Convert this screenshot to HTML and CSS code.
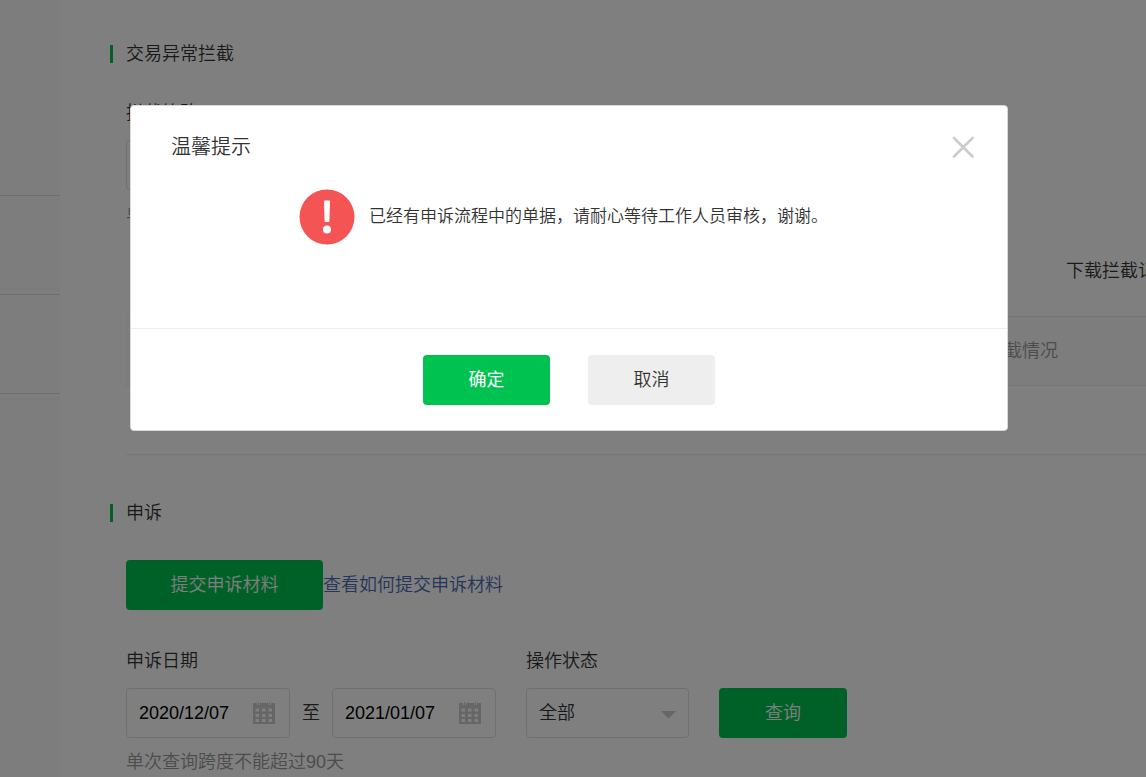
FILE: index.html
```html
<!DOCTYPE html>
<html lang="zh-CN">

<head>
  <meta charset="UTF-8" />
  <meta name="viewport" content="width=device-width, initial-scale=1.0" />
  <title>交易异常拦截</title>
  <link rel="stylesheet" href="styles.css">
</head>

<body>
  <div class="page">
    <aside class="sidebar">
      <div class="side-item first"></div>
      <div class="side-item"></div>
      <div class="side-item"></div>
    </aside>

    <main class="main">
      <section class="block">
        <h2 class="block-title">交易异常拦截</h2>
        <div class="block-body">
          <div class="field">
            <label for="blockDate">拦截策略</label>
            <input type="text" id="blockDate" class="input" />
            <p class="hint">单</p>
          </div>
          <div class="download"><a href="#">下载拦截记录</a></div>
          <table class="table">
            <thead>
              <tr>
                <th></th>
                <th class="col-status">拦截情况</th>
              </tr>
            </thead>
            <tbody>
              <tr>
                <td></td>
                <td></td>
              </tr>
            </tbody>
          </table>
        </div>
      </section>

      <section class="block">
        <h2 class="block-title">申诉</h2>
        <div class="block-body">
          <div class="submit-row">
            <button class="btn btn-green btn-submit">提交申诉材料</button>
            <a href="#" class="help">查看如何提交申诉材料</a>
          </div>
          <form class="search" onsubmit="return false">
            <div class="field">
              <label for="startDate">申诉日期</label>
              <div class="dates">
                <div class="control">
                  <input type="text" id="startDate" class="input" value="2020/12/07" />
                  <svg class="calendar" width="22" height="22" viewBox="0 0 22 22">
                    <path fill="currentColor" fill-rule="evenodd" d="M0 1H4V3H7V1H15V3H18V1H22V22H0ZM2.5 6.5V9.5H6V6.5ZM9 6.5V9.5H12.5V6.5ZM15.5 6.5V9.5H19V6.5ZM2.5 12V15H6V12ZM9 12V15H12.5V12ZM15.5 12V15H19V12ZM2.5 17V20H6V17ZM9 17V20H12.5V17ZM15.5 17V20H19V17Z" />
                    <path fill="currentColor" d="M5 0H6V3H5ZM16 0H17V3H16Z" />
                  </svg>
                </div>
                <span>至</span>
                <div class="control">
                  <input type="text" class="input" value="2021/01/07" aria-label="结束日期" />
                  <svg class="calendar" width="22" height="22" viewBox="0 0 22 22">
                    <path fill="currentColor" fill-rule="evenodd" d="M0 1H4V3H7V1H15V3H18V1H22V22H0ZM2.5 6.5V9.5H6V6.5ZM9 6.5V9.5H12.5V6.5ZM15.5 6.5V9.5H19V6.5ZM2.5 12V15H6V12ZM9 12V15H12.5V12ZM15.5 12V15H19V12ZM2.5 17V20H6V17ZM9 17V20H12.5V17ZM15.5 17V20H19V17Z" />
                    <path fill="currentColor" d="M5 0H6V3H5ZM16 0H17V3H16Z" />
                  </svg>
                </div>
              </div>
              <p class="hint">单次查询跨度不能超过90天</p>
            </div>
            <div class="field">
              <label for="status">操作状态</label>
              <div class="control">
                <select id="status" class="input">
                  <option>全部</option>
                </select>
                <svg class="arrow" width="16" height="8" viewBox="0 0 16 8">
                  <path fill="currentColor" d="M0 0H15L7.5 7.5Z" />
                </svg>
              </div>
            </div>
            <button class="btn btn-green btn-search">查询</button>
          </form>
        </div>
      </section>
    </main>
  </div>

  <div class="mask">
    <div class="dialog" role="dialog" aria-labelledby="dialogTitle">
      <div class="dialog-head">
        <h3 id="dialogTitle">温馨提示</h3>
        <button class="close" aria-label="关闭">
          <svg width="22" height="22" viewBox="0 0 22 22">
            <path d="M2 2L20.5 20.5M20.5 2L2 20.5" fill="none" stroke="#ccc" stroke-width="2.6" stroke-linecap="round" />
          </svg>
        </button>
      </div>
      <div class="dialog-body">
        <svg width="56" height="56" viewBox="0 0 56 56">
          <circle cx="28" cy="28" r="27.5" fill="#f45454" />
          <path d="M25 12.5Q25 11.5 26 11.5H30Q31 11.5 31 12.5L30.4 32Q30.4 33 29.4 33H26.6Q25.6 33 25.6 32Z" fill="#fff" />
          <circle cx="28" cy="40.5" r="4" fill="#fff" />
        </svg>
        <p>已经有申诉流程中的单据，请耐心等待工作人员审核，谢谢。</p>
      </div>
      <div class="dialog-foot">
        <button class="btn btn-green btn-ok">确定</button>
        <button class="btn btn-gray">取消</button>
      </div>
    </div>
  </div>
</body>

</html>
```
FILE: styles.css
```css
* {
  margin: 0;
  padding: 0;
  box-sizing: border-box;
}

body {
  font: 350 18px/24px "Liberation Sans", "Noto Sans CJK SC", sans-serif;
  color: #333;
  background-color: #fff;
  overflow: hidden;
}

button,
input,
select {
  font: inherit;
}

a {
  color: inherit;
  text-decoration: none;
}

.page {
  display: flex;
  min-height: 100vh;
}

/* left menu */
.sidebar {
  width: 60px;
  flex-shrink: 0;
  background-color: #fafafa;
}

.side-item {
  height: 99px;
  border-bottom: 1px solid #dedede;
}

.side-item.first {
  height: 196px;
}

.main {
  flex: 1 0 auto;
  min-width: 1180px;
  padding: 42px 66px 0 50px;
}

.block {
  margin-bottom: 46px;
}

.block-title {
  display: flex;
  align-items: center;
  gap: 13px;
  margin-bottom: 35px;
  font-size: 18px;
  font-weight: inherit;
}

.block-title::before {
  content: "";
  width: 3px;
  height: 18px;
  background-color: #00c250;
}

.block-body {
  padding-left: 16px;
}

.field label {
  display: block;
  margin-bottom: 15px;
}

.input {
  display: block;
  width: 164px;
  height: 50px;
  padding: 0 12px;
  border: 1px solid #dedede;
  border-radius: 4px;
  background-color: #fff;
  color: #000;
  appearance: none;
}

select.input {
  width: 163px;
  color: #333;
}

.hint {
  margin-top: 12px;
  color: #999;
}

.download {
  margin: 33px 0;
  text-align: right;
}

.table {
  width: 100%;
  border-spacing: 0;
}

.table th {
  height: 70px;
  border-top: 1px solid #eee;
  border-bottom: 1px solid #eee;
  background-color: #fafafa;
  color: #999;
  font-weight: inherit;
  text-align: left;
}

.table td {
  height: 69px;
  border-bottom: 1px solid #eee;
}

.table .col-status {
  width: 188px;
}

.btn {
  width: 127px;
  height: 50px;
  border: none;
  border-radius: 4px;
  cursor: pointer;
}

.btn-green {
  background-color: #00c250;
  color: #fff;
}

.btn-gray {
  background-color: #eee;
  color: #333;
}

.btn-ok {
  font-weight: normal;
}

.btn-submit {
  width: 197px;
}

.submit-row {
  display: flex;
  align-items: center;
  margin-bottom: 39px;
}

.help {
  color: #4a68b0;
}

.search {
  display: flex;
  gap: 30px;
}

.dates {
  display: flex;
  align-items: center;
  gap: 12px;
}

.control {
  position: relative;
}

.calendar {
  position: absolute;
  top: 14px;
  right: 15px;
  color: #ccc;
}

.arrow {
  position: absolute;
  top: 23px;
  right: 12px;
  color: #ccc;
  pointer-events: none;
}

.btn-search {
  width: 128px;
  margin-top: 39px;
}

/* popup */
.mask {
  position: fixed;
  inset: 0;
  padding: 105px 138px 0 130px;
  background-color: rgba(0, 0, 0, 0.5);
}

.dialog {
  border: 1px solid #d9d9d9;
  border-radius: 4px;
  background-color: #fff;
}

.dialog-head {
  display: flex;
  justify-content: space-between;
  align-items: center;
  padding: 27px 33px 0 40px;
}

.dialog-head h3 {
  font-size: 20px;
  font-weight: inherit;
  line-height: 28px;
}

.close {
  width: 22px;
  height: 22px;
  border: none;
  background: none;
  cursor: pointer;
}

.close svg {
  display: block;
}

.dialog-body {
  display: flex;
  gap: 14px;
  min-height: 167px;
  padding: 28px 40px 0 168px;
}

.dialog-body svg {
  flex-shrink: 0;
}

.dialog-body p {
  font-size: 17px;
  line-height: 56px;
}

.dialog-foot {
  display: flex;
  justify-content: center;
  gap: 38px;
  padding: 26px 0 25px;
  border-top: 1px solid #eee;
}
```
